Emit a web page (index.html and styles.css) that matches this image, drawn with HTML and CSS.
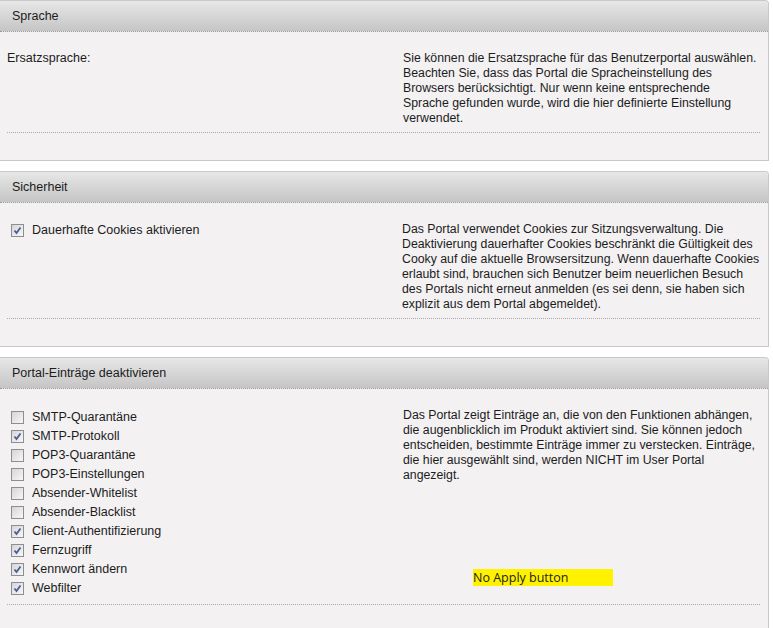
FILE: index.html
```html
<!DOCTYPE html>
<html lang="de">
<head>
    <meta charset="UTF-8">
    <title>Benutzerportal Einstellungen</title>
    <link rel="stylesheet" href="styles.css">
</head>
<body>
    <div class="panel">
        <div class="phead">Sprache</div>
        <div class="pbody">
            <div class="row">
                <div class="left">Ersatzsprache:</div>
                <div class="desc">Sie können die Ersatzsprache für das Benutzerportal auswählen.<br>
                    Beachten Sie, dass das Portal die Spracheinstellung des<br>
                    Browsers berücksichtigt. Nur wenn keine entsprechende<br>
                    Sprache gefunden wurde, wird die hier definierte Einstellung<br>
                    verwendet.</div>
            </div>
        </div>
    </div>

    <div class="panel">
        <div class="phead">Sicherheit</div>
        <div class="pbody">
            <div class="row">
                <div class="left left-cb">
                    <label class="cb"><span class="box on"></span>Dauerhafte Cookies aktivieren</label>
                </div>
                <div class="desc desc2">Das Portal verwendet Cookies zur Sitzungsverwaltung. Die<br>
                    Deaktivierung dauerhafter Cookies beschränkt die Gültigkeit des<br>
                    Cooky auf die aktuelle Browsersitzung. Wenn dauerhafte Cookies<br>
                    erlaubt sind, brauchen sich Benutzer beim neuerlichen Besuch<br>
                    des Portals nicht erneut anmelden (es sei denn, sie haben sich<br>
                    explizit aus dem Portal abgemeldet).</div>
            </div>
        </div>
    </div>

    <div class="panel">
        <div class="phead">Portal-Einträge deaktivieren</div>
        <div class="pbody">
            <div class="row">
                <div class="left left-list">
                    <label class="cb"><span class="box"></span>SMTP-Quarantäne</label>
                    <label class="cb"><span class="box on"></span>SMTP-Protokoll</label>
                    <label class="cb"><span class="box"></span>POP3-Quarantäne</label>
                    <label class="cb"><span class="box"></span>POP3-Einstellungen</label>
                    <label class="cb"><span class="box"></span>Absender-Whitelist</label>
                    <label class="cb"><span class="box"></span>Absender-Blacklist</label>
                    <label class="cb"><span class="box on"></span>Client-Authentifizierung</label>
                    <label class="cb"><span class="box on"></span>Fernzugriff</label>
                    <label class="cb"><span class="box on"></span>Kennwort ändern</label>
                    <label class="cb"><span class="box on"></span>Webfilter</label>
                </div>
                <div class="desc">Das Portal zeigt Einträge an, die von den Funktionen abhängen,<br>
                    die augenblicklich im Produkt aktiviert sind. Sie können jedoch<br>
                    entscheiden, bestimmte Einträge immer zu verstecken. Einträge,<br>
                    die hier ausgewählt sind, werden NICHT im User Portal<br>
                    angezeigt.
                    <div class="note">No Apply button</div>
                </div>
            </div>
        </div>
    </div>
</body>
</html>
```

FILE: styles.css
```css
body{
    margin: 0;
    background-color: white;
    font-family: "Liberation Sans", Arial, sans-serif;
    font-size: 12px;
    color: #1c1c1c;
}

.panel{
    width: 768px;
    margin-bottom: 10px;
    background-color: #f3f1f2;
    border: 1px solid #c9c9c9;
    border-left: none;
    border-top-right-radius: 4px;
}

.phead{
    height: 30px;
    line-height: 31px;
    padding-left: 12px;
    font-size: 12.5px;
    background: linear-gradient(#e7e7e7, #c5c5c5);
    border-bottom: 1px dotted #9c9c9c;
    border-top-right-radius: 4px;
}

.pbody{
    padding: 19px 8px 27px 7px;
}

.row{
    display: flex;
    border-bottom: 1px dotted #a8a8a8;
    padding-bottom: 6px;
}

.left{
    width: 396px;
    flex-shrink: 0;
    line-height: 15px;
    font-size: 12.5px;
}

.left-cb{
    padding-left: 4px;
    padding-top: 2px;
    box-sizing: border-box;
}

.left-list{
    padding-left: 4px;
    box-sizing: border-box;
}

.desc{
    width: 356px;
    flex-shrink: 0;
    line-height: 15px;
    font-size: 12.3px;
    white-space: nowrap;
}

.desc2{
    margin-left: -1px;
}

.cb{
    display: flex;
    align-items: center;
    height: 19px;
}

.left-cb .cb{
    height: 13px;
}

.box{
    width: 11px;
    height: 11px;
    margin-right: 8px;
    border: 1px solid #8d8e8e;
    background: linear-gradient(135deg, #d6d6d6, #f7f7f7);
    flex-shrink: 0;
}

.box.on{
    background: url("data:image/svg+xml,%3Csvg xmlns='http://www.w3.org/2000/svg' width='11' height='11'%3E%3Cpath d='M2.5 5.5 L4.5 8 L8.5 2.5' fill='none' stroke='%234a5d99' stroke-width='1.8'/%3E%3C/svg%3E") no-repeat center, linear-gradient(135deg, #d6d6d6, #f7f7f7);
}

.note{
    width: 140px;
    height: 17px;
    margin: 86px 0 0 70px;
    background-color: #fff200;
    font-family: "Open Sans", sans-serif;
    font-size: 12.5px;
    line-height: 17px;
    color: #222;
}
```
